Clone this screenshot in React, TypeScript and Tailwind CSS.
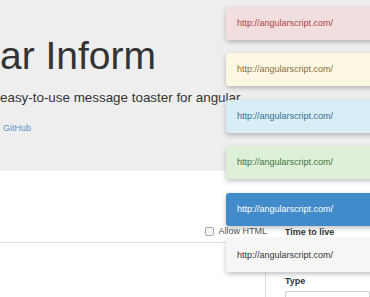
const toasts = [
  { top: 'top-[7px]', cls: 'bg-[#f2dede] text-[#a94442]' },
  { top: 'top-[53px]', cls: 'bg-[#fcf8e3] text-[#8a6d3b]' },
  { top: 'top-[100px]', cls: 'bg-[#d9edf7] text-[#31708f]' },
  { top: 'top-[146px]', cls: 'bg-[#dff0d8] text-[#3c763d]' },
  { top: 'top-[193px]', cls: 'bg-[#428bca] text-white' },
  { top: 'top-[239px]', cls: 'bg-[#f7f7f7] text-[#333]' },
]

export default function App() {
  return (
    <div className="relative h-[297px] w-[370px] overflow-hidden bg-white font-['Liberation_Sans',Arial,sans-serif] text-[#333]">
      {/* Jumbotron */}
      <div className="h-[171px] bg-[#eeeeee] pt-[34px]">
        <h1 className="text-[39px] leading-[43px] font-normal">ar Inform</h1>
        <p className="mt-[11px] text-[13.4px] leading-[20px]">easy-to-use message toaster for angular</p>
        <a className="mt-[14px] ml-[3px] block text-[9px] leading-[13px] text-[#5f92c9]">GitHub</a>
      </div>

      {/* Demo form */}
      <div className="flex h-[72px]">
        <div className="flex w-[265px] items-end justify-end border-b border-[#dddddd] pb-[5px]">
          <label className="mr-[-2px] flex items-center gap-[4px] text-[9px] leading-[12px] text-[#555]">
            <span className="h-[9px] w-[9px] rounded-[2px] border border-[#aaa] bg-[#f4f4f4]" />
            Allow HTML
          </label>
        </div>
        <div className="flex flex-1 items-end pb-[5px] pl-[20px]">
          <span className="text-[9px] font-bold leading-[12px]">Time to live</span>
        </div>
      </div>
      <div className="flex h-[60px]">
        <div className="w-[265px]" />
        <div className="flex-1 border-l border-[#dddddd] pl-[19px] pt-[32px]">
          <div className="text-[9px] font-bold leading-[12px]">Type</div>
          <div className="mt-[4px] h-[20px] rounded-[2px] border border-[#ccc] bg-white" />
        </div>
      </div>

      {/* Toasts */}
      {toasts.map((t, i) => (
        <div
          key={i}
          className={`absolute left-[226px] flex h-[33px] w-[160px] items-center rounded-[3px] pl-[11px] text-[9px] shadow-[0_2px_5px_rgba(0,0,0,0.25)] ${t.top} ${t.cls}`}
        >
          http://angularscript.com/
        </div>
      ))}
    </div>
  )
}
